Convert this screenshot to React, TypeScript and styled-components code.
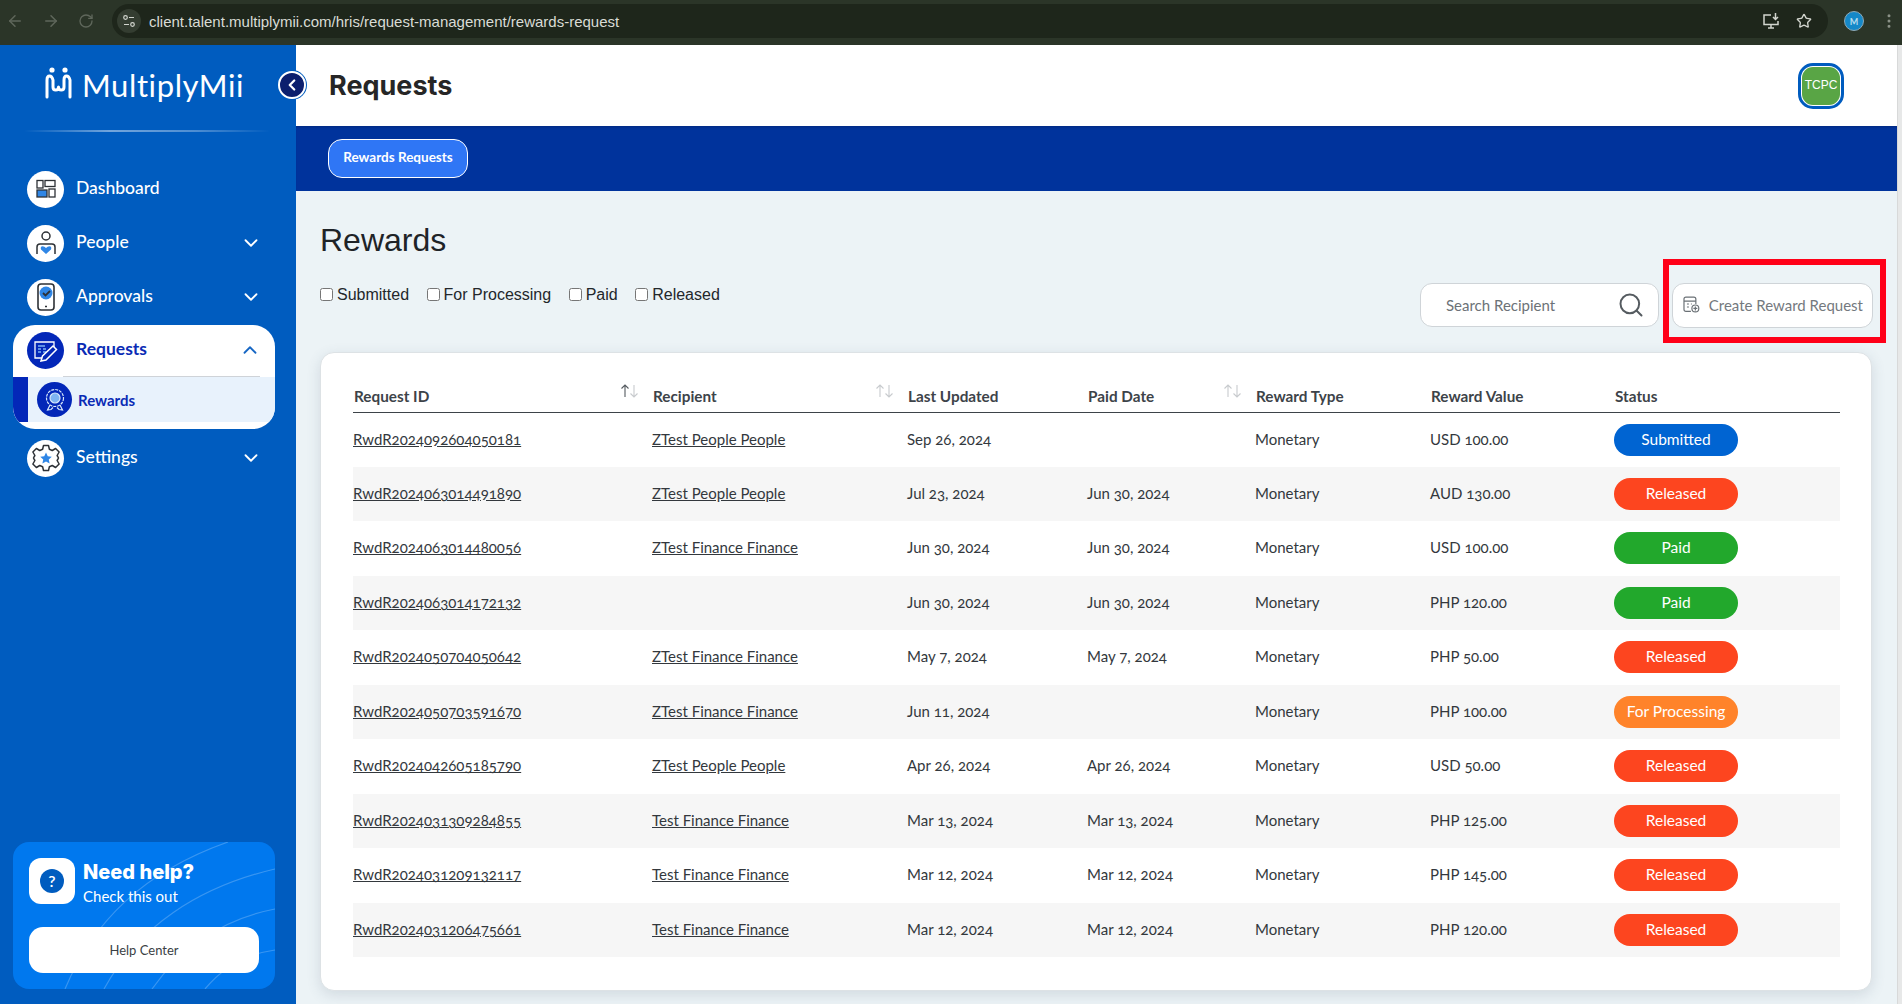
import React from "react";
import styled, { createGlobalStyle } from "styled-components";
import { ArrowLeft, ArrowRight, RotateCw, Star, EllipsisVertical, ChevronDown, ChevronUp, ChevronLeft, Search } from "lucide-react";

const Global = createGlobalStyle`
  html, body { margin: 0; padding: 0; height: 100%; overflow: hidden; }
  body { font-family: "Lato", "Open Sans", sans-serif; }
  * { box-sizing: border-box; }
`;

const Page = styled.div`
  width: 1902px;
  height: 1004px;
  display: flex;
  flex-direction: column;
  overflow: hidden;
  background: #ecf3f6;
`;

/* Browser chrome */
const BrowserBar = styled.div`
  height: 45px;
  flex: none;
  background: #2b3528;
  display: flex;
  align-items: center;
  padding: 0 0 3px 5px;
  color: #8b9287;
`;
const NavButton = styled.span`
  width: 36px;
  height: 20px;
  display: flex;
  align-items: center;
  justify-content: flex-start;
  padding-left: 1px;
  color: ${(p: { $dim?: boolean }) => (p.$dim ? "#5f675b" : "#7b8377")};
`;
const UrlPill = styled.div`
  width: 1716px;
  height: 34px;
  margin-left: -1px;
  border-radius: 17px;
  background: #1e261b;
  display: flex;
  align-items: center;
  padding: 0 16px 0 5px;
`;
const TuneBadge = styled.span`
  width: 24px;
  height: 24px;
  border-radius: 50%;
  background: #343d31;
  display: flex;
  align-items: center;
  justify-content: center;
  margin-right: 8px;
`;
const UrlText = styled.span`
  flex: 1;
  font: 15px "Liberation Sans", Arial, sans-serif;
  color: #d9dcd5;
`;
const PillIcon = styled.span`
  display: flex;
  margin-left: 16px;
  color: #d2d5ce;
`;
const ProfileDot = styled.span`
  width: 20px;
  height: 20px;
  margin-left: 16px;
  border-radius: 50%;
  background: #1588c8;
  border: 1px solid #8fa9b5;
  display: flex;
  align-items: center;
  justify-content: center;
  color: #b6dcee;
  font: 700 9px/1 "Lato", sans-serif;
`;
const DotsIcon = styled.span`
  display: flex;
  margin-left: 16px;
  color: #8b9287;
`;

/* Shell */
const Shell = styled.div`
  flex: 1;
  display: flex;
  min-height: 0;
  position: relative;
`;
const Sidebar = styled.aside`
  width: 296px;
  flex: none;
  background: #005cbf;
  display: flex;
  flex-direction: column;
  color: #fff;
  padding-bottom: 15px;
`;
const LogoRow = styled.div`
  height: 63px;
  padding: 22px 0 0 45px;
  display: flex;
  align-items: flex-start;
  gap: 10px;
`;
const LogoWord = styled.span`
  font: 400 31px/36px "Lato", sans-serif;
  letter-spacing: 0.6px;
  color: #fff;
`;
const Divider = styled.div`
  height: 2px;
  margin: 22px 26px 0 24px;
  background: linear-gradient(90deg, rgba(255,255,255,0), rgba(255,255,255,.45) 35%, rgba(255,255,255,.3) 70%, rgba(255,255,255,0));
`;
const Nav = styled.nav`
  margin-top: 39px;
  display: flex;
  flex-direction: column;
`;
const NavItem = styled.div`
  height: 36px;
  margin: 0 0 18px 27px;
  width: 235px;
  display: flex;
  align-items: center;
  gap: 12px;
  font-size: 17.5px;
  font-weight: 500;
  line-height: 32px;
  color: #fff;
`;
const NavIconCircle = styled.span`
  width: 37px;
  height: 37px;
  border-radius: 50%;
  flex: none;
  display: flex;
  align-items: center;
  justify-content: center;
  background: ${(p: { $active?: boolean }) => (p.$active ? "#0327b8" : "#fff")};
`;
const NavLabel = styled.span`
  flex: 1;
  padding-bottom: 2px;
`;
const ActiveGroup = styled.div`
  margin: -8px 21px 11px 13px;
  height: 104px;
  border-radius: 22px;
  background: #fff;
  overflow: hidden;
  display: flex;
  flex-direction: column;
`;
const ActiveHead = styled.div`
  height: 51px;
  flex: none;
  padding: 7px 14px 0 14px;
  display: flex;
  align-items: flex-start;
  gap: 12px;
  font-size: 17.5px;
  font-weight: 700;
  color: #0a2bb5;
`;
const ActiveLabel = styled.span`
  flex: 1;
  line-height: 34px;
`;
const ActiveChevron = styled.span`
  display: flex;
  margin-top: 7px;
  color: #1767c4;
`;
const SubRule = styled.div`
  height: 1px;
  flex: none;
  margin: 0 15px 0 50px;
  background: #cfd3d8;
`;
const SubRow = styled.div`
  height: 45px;
  flex: none;
  background: #e8f2fc;
  border-left: 15px solid #0327b8;
  display: flex;
  align-items: center;
  gap: 6px;
  padding-left: 9px;
  font-size: 15px;
  font-weight: 700;
  color: #0a2bb5;
`;
const SubIcon = styled.span`
  width: 35px;
  height: 35px;
  border-radius: 50%;
  background: #0327b8;
  display: flex;
  align-items: center;
  justify-content: center;
`;
const HelpCard = styled.div`
  position: relative;
  overflow: hidden;
  margin: auto 21px 0 13px;
  height: 147px;
  border-radius: 16px;
  background: #0078ee;
  padding: 16px;
`;
const HelpArcs = styled.svg`
  position: absolute;
  inset: 0;
`;
const HelpTop = styled.div`
  position: relative;
  display: flex;
  gap: 8px;
`;
const HelpTile = styled.span`
  width: 46px;
  height: 46px;
  border-radius: 12px;
  background: #fff;
  display: flex;
  align-items: center;
  justify-content: center;
`;
const HelpQ = styled.span`
  width: 24px;
  height: 24px;
  border-radius: 50%;
  background: #005cbf;
  color: #fff;
  font: 600 16px/24px "Lato", sans-serif;
  text-align: center;
`;
const HelpText = styled.div`
  display: flex;
  flex-direction: column;
`;
const HelpTitle = styled.span`
  font: 800 20px/28px "Inter", sans-serif;
  color: #fff;
`;
const HelpSub = styled.span`
  font: 400 15px/20px "Lato", sans-serif;
  color: #fff;
`;
const HelpButton = styled.div`
  position: relative;
  margin-top: 21px;
  height: 46px;
  border-radius: 14px;
  background: #fff;
  color: #3a3f45;
  font: 400 13px/46px "Lato", sans-serif;
  text-align: center;
`;
const CollapseButton = styled.span`
  position: absolute;
  left: 278px;
  top: 26px;
  width: 28px;
  height: 28px;
  border-radius: 50%;
  background: #0c1f6e;
  border: 2px solid #fff;
  box-shadow: 0 0 0 1px #005cbf;
  color: #fff;
  display: flex;
  align-items: center;
  justify-content: center;
`;

/* Main */
const Main = styled.main`
  flex: 1;
  min-width: 0;
  display: flex;
  flex-direction: column;
`;
const Header = styled.header`
  height: 81px;
  flex: none;
  background: #fff;
  padding: 0 53px 0 33px;
  display: flex;
  align-items: center;
  justify-content: space-between;
`;
const PageTitle = styled.h1`
  margin: 0;
  font: 700 27px/1 "Inter", sans-serif;
  color: #262626;
`;
const AvatarRing = styled.span`
  width: 46px;
  height: 46px;
  border: 3px solid #005cbf;
  border-radius: 15px;
  padding: 1px;
  display: flex;
`;
const Avatar = styled.span`
  flex: 1;
  border-radius: 11px;
  background: #59a545;
  color: #fff;
  font: 12px/36px "Liberation Sans", Arial, sans-serif;
  text-align: center;
`;
const TabBand = styled.div`
  height: 65px;
  flex: none;
  background: #00339c;
  padding: 13px 0 0 32px;
  box-shadow: inset 0 3px 3px -2px #00277e;
`;
const TabPill = styled.span`
  display: inline-block;
  width: 140px;
  height: 39px;
  border: 1px solid #fff;
  border-radius: 14px;
  background: #2f76f5;
  color: #fff;
  font: 700 13.5px/35px "Lato", sans-serif;
  text-align: center;
`;
const Content = styled.div`
  flex: 1;
  padding: 30px 11px 0 24px;
`;
const Heading = styled.h2`
  margin: 0;
  font: 400 32px/38px "Liberation Sans", Arial, sans-serif;
  color: #1e2327;
`;
const Toolbar = styled.div`
  display: flex;
  justify-content: space-between;
  align-items: flex-start;
`;
const Filters = styled.div`
  display: flex;
  gap: 17.5px;
  padding-top: 26px;
`;
const FilterLabel = styled.label`
  display: flex;
  align-items: center;
  gap: 4px;
  font: 16px/20px "Liberation Sans", Arial, sans-serif;
  color: #23272b;
`;
const FilterBox = styled.input`
  width: 13px;
  height: 13px;
  margin: 0 0 2px;
`;
const Actions = styled.div`
  display: flex;
  align-items: flex-start;
  gap: 4px;
`;
const SearchBox = styled.div`
  width: 239px;
  height: 44px;
  margin-top: 24px;
  border: 1px solid #cfd4d8;
  border-radius: 12px;
  background: #fff;
  padding: 0 13px 1px 25px;
  display: flex;
  align-items: center;
  justify-content: space-between;
  font-size: 15px;
  color: #6c7277;
`;
const AnnotationFrame = styled.div`
  width: 223px;
  height: 84px;
  border: 6px solid #ff0018;
  padding: 18px 0 0 3px;
`;
const CreateButton = styled.div`
  width: 201px;
  height: 45px;
  border: 1px solid #cfd4d8;
  border-radius: 12px;
  background: #fff;
  padding: 0 9px 2px 10px;
  display: flex;
  align-items: center;
  gap: 9px;
  font-size: 15px;
  color: #74797e;
  white-space: nowrap;
`;
const Card = styled.section`
  margin: 9px 14px 0 0;
  padding: 33px 32px 33px 32px;
  background: #fff;
  border: 1px solid #dde2e5;
  border-radius: 14px;
  box-shadow: 0 4px 14px rgba(70, 90, 110, .16);
`;
const Table = styled.table`
  width: 1487px;
  table-layout: fixed;
  border-collapse: collapse;
  font-size: 15px;
  color: #33383d;
  font-feature-settings: "onum" 1;
`;
const Th = styled.th`
  height: 26px;
  padding: 0 0 0 1px;
  text-align: left;
  font-weight: 700;
  font-size: 15.3px;
  color: #3d4349;
  border-bottom: 1px solid #3d4349;
  vertical-align: top;
`;
const ThInner = styled.div`
  display: flex;
  justify-content: space-between;
  padding-right: 13px;
  line-height: 21px;
`;
const SortIcon = styled.svg`
  margin-top: -2px;
`;
const Row = styled.tr`
  height: 54.5px;
  background: ${(p: { $alt: boolean }) => (p.$alt ? "#f6f6f6" : "#fff")};
`;
const Td = styled.td`
  padding: 0 0 2px;
`;
const RowLink = styled.a`
  color: #33383d;
  text-decoration: underline;
`;
const Badge = styled.span`
  display: block;
  width: 124px;
  height: 32px;
  margin-top: 2px;
  border-radius: 16px;
  color: #fff;
  text-align: center;
  font-size: 15.5px;
  line-height: 30px;
  font-feature-settings: normal;
  background: ${(p: { $status: string }) =>
    ({ Submitted: "#0064d2", Released: "#fd451f", Paid: "#22a82c", "For Processing": "#ff832a" } as Record<string, string>)[p.$status]};
`;
const Scrollbar = styled.div`
  width: 5px;
  flex: none;
  background: #e7e8e8;
  border-left: 1px solid #d8d9d9;
`;

/* Drawings */
const LogoMark = () => (
  <svg width="27" height="37" viewBox="0 0 27 37" fill="none">
    <circle cx="7" cy="3" r="2.6" fill="#fff" />
    <circle cx="20" cy="3" r="2.6" fill="#fff" />
    <path d="M2 30V13q0-4 2.500-4T8 13v7q0 3 2.750 3T13.500 20q0 3 2.750 3T19 20v-7q0-4 2.500-4T25 13v17" stroke="#fff" strokeWidth="3" strokeLinecap="round" strokeLinejoin="round" />
  </svg>
);
const DashIcon = () => (
  <svg width="20" height="20" viewBox="0 0 20 20" fill="none" stroke="#2d3136" strokeWidth="1.300">
    <rect x="1" y="1.500" width="6" height="7.500" />
    <rect x="9" y="1.500" width="10" height="6" />
    <rect x="1" y="11" width="10" height="7" fill="#2f86e6" />
    <rect x="13" y="10" width="6" height="8" />
  </svg>
);
const PeopleIcon = () => (
  <svg width="24" height="26" viewBox="0 0 24 26" fill="none" stroke="#2d3136" strokeWidth="1.500">
    <circle cx="12" cy="6" r="4" />
    <path d="M6 14h12" />
    <path d="M3 24v-7q0-3 3-3M21 24v-7q0-3-3-3" />
    <path d="M12 24l-5-4.500q-1-3 1.500-3.200 2 0 3.500 1.700 1.500-1.700 3.500-1.700 2.500.2 1.500 3.200z" fill="#2f86e6" stroke="none" />
  </svg>
);
const ApprovalIcon = () => (
  <svg width="20" height="28" viewBox="0 0 20 28" fill="none" stroke="#2d3136" strokeWidth="1.600">
    <rect x="2" y="1" width="16" height="26" rx="3" />
    <circle cx="10" cy="10" r="6.500" fill="#2f86e6" stroke="none" />
    <path d="M7 10l2.500 2.500L14 8" strokeWidth="1.800" />
    <path d="M9 23.500h2" />
  </svg>
);
const RequestIcon = () => (
  <svg width="26" height="24" viewBox="0 0 26 24" fill="none" stroke="#fff" strokeWidth="1.300">
    <path d="M13 19H2V3h19v6" />
    <path d="M5 7h7M5 10h3M5 13h3M10 10h3M10 13h3" stroke="#7eb4f2" strokeWidth="1.600" />
    <path d="M8 22l1.500-5L20 7l3.500 3.500L13 21z" fill="#0327b8" strokeWidth="1.500" />
  </svg>
);
const SettingsIcon = () => (
  <svg width="30" height="30" viewBox="0 0 24 24" fill="none" stroke="#2d3136" strokeWidth="1.200" strokeLinejoin="round">
    <path d="M10 2h4l.7 3 2.300 1 2.700-1.600 2.800 2.800L20.900 10l.6 1 .5 1-.5 1-.6 1 1.600 2.800-2.800 2.800L17 18l-2.300 1-.7 3h-4l-.7-3L7 18l-2.700 1.600-2.800-2.800L3.100 14l-.6-1L2 12l.5-1 .6-1-1.600-2.800 2.800-2.800L7 6l2.300-1z" />
    <path d="M12 7.500l1.400 3 3.200.4-2.400 2.200.7 3.200-2.900-1.600-2.900 1.600.7-3.200-2.400-2.200 3.200-.4z" fill="#2f86e6" stroke="none" />
  </svg>
);
const RewardIcon = () => (
  <svg width="22" height="24" viewBox="0 0 22 24" fill="none" stroke="#d8e8fb" strokeWidth="1.200">
    <circle cx="11" cy="10" r="8.500" strokeDasharray="3 1" />
    <circle cx="11" cy="10" r="5" fill="#7eb4f2" />
    <path d="M6 17l-2.500 5 3.500-.5 2-2M16 17l2.500 5-3.500-.5-2-2" />
  </svg>
);
const TuneIcon = () => (
  <svg width="14" height="14" viewBox="0 0 14 14" fill="none" stroke="#d2d5ce" strokeWidth="1.200">
    <circle cx="3.500" cy="3.500" r="1.800" />
    <path d="M7 3.500h5M2 10.500h5" />
    <circle cx="10.500" cy="10.500" r="1.800" />
  </svg>
);
const InstallIcon = () => (
  <svg width="18" height="16" viewBox="0 0 18 16" fill="none" stroke="#d2d5ce" strokeWidth="1.500">
    <path d="M9 2H2v9.500h14V8" />
    <path d="M6 15h6M9 11.500V15" />
    <path d="M13.500 0v6M11 4l2.500 2.500L16 4" />
  </svg>
);
const CreateIcon = () => (
  <svg width="17" height="17" viewBox="0 0 17 17" fill="none" stroke="#6a7075" strokeWidth="1.200">
    <path d="M8 15.500H3q-2 0-2-2V3q0-2 2-2h8q2 0 2 2v5" />
    <path d="M1 5h12M4 8h2M4 11h2M8 8h1" />
    <circle cx="12.500" cy="12.500" r="3.500" fill="#fff" />
    <path d="M12.500 10.500v4M10.500 12.500h4" />
  </svg>
);
const SortArrows = ({ dark }: { dark?: boolean }) => (
  <SortIcon width="19" height="14" viewBox="0 0 19 14" fill="none" strokeWidth="1.100">
    <path d="M5 13V1M1.500 4.500L5 1l3.500 3.500" stroke={dark ? "#555b60" : "#c8cbce"} />
    <path d="M14 1v12M10.500 9.500L14 13l3.500-3.500" stroke="#c8cbce" />
  </SortIcon>
);
const Arcs = () => (
  <HelpArcs width="262" height="147" viewBox="0 0 262 147" fill="none" stroke="#fff" strokeOpacity=".22" strokeWidth="1.200">
    <path d="M52 147C80 80 130 30 215 0" />
    <path d="M91 147C125 85 185 45 262 27" />
    <path d="M139 147C165 110 205 78 262 67" />
    <path d="M192 147C210 125 235 112 262 108" />
  </HelpArcs>
);

const columns: { label: string; sort?: "dark" | "light"; width: number }[] = [
  { label: "Request ID", sort: "dark", width: 299 },
  { label: "Recipient", sort: "light", width: 255 },
  { label: "Last Updated", width: 180 },
  { label: "Paid Date", sort: "light", width: 168 },
  { label: "Reward Type", width: 175 },
  { label: "Reward Value", width: 184 },
  { label: "Status", width: 226 },
];

const rows = [
  ["RwdR2024092604050181", "ZTest People People", "Sep 26, 2024", "", "USD 100.00", "Submitted"],
  ["RwdR2024063014491890", "ZTest People People", "Jul 23, 2024", "Jun 30, 2024", "AUD 130.00", "Released"],
  ["RwdR2024063014480056", "ZTest Finance Finance", "Jun 30, 2024", "Jun 30, 2024", "USD 100.00", "Paid"],
  ["RwdR2024063014172132", "", "Jun 30, 2024", "Jun 30, 2024", "PHP 120.00", "Paid"],
  ["RwdR2024050704050642", "ZTest Finance Finance", "May 7, 2024", "May 7, 2024", "PHP 50.00", "Released"],
  ["RwdR2024050703591670", "ZTest Finance Finance", "Jun 11, 2024", "", "PHP 100.00", "For Processing"],
  ["RwdR2024042605185790", "ZTest People People", "Apr 26, 2024", "Apr 26, 2024", "USD 50.00", "Released"],
  ["RwdR2024031309284855", "Test Finance Finance", "Mar 13, 2024", "Mar 13, 2024", "PHP 125.00", "Released"],
  ["RwdR2024031209132117", "Test Finance Finance", "Mar 12, 2024", "Mar 12, 2024", "PHP 145.00", "Released"],
  ["RwdR2024031206475661", "Test Finance Finance", "Mar 12, 2024", "Mar 12, 2024", "PHP 120.00", "Released"],
];

const navTop = [
  { label: "Dashboard", icon: <DashIcon /> },
  { label: "People", icon: <PeopleIcon />, more: true },
  { label: "Approvals", icon: <ApprovalIcon />, more: true },
];

export default function App() {
  return (
    <Page>
      <Global />
      <BrowserBar>
        <NavButton $dim><ArrowLeft size={18} /></NavButton>
        <NavButton $dim><ArrowRight size={18} /></NavButton>
        <NavButton $dim><RotateCw size={16} /></NavButton>
        <UrlPill>
          <TuneBadge><TuneIcon /></TuneBadge>
          <UrlText>client.talent.multiplymii.com/hris/request-management/rewards-request</UrlText>
          <PillIcon><InstallIcon /></PillIcon>
          <PillIcon><Star size={16} /></PillIcon>
        </UrlPill>
        <ProfileDot>M</ProfileDot>
        <DotsIcon><EllipsisVertical size={18} /></DotsIcon>
      </BrowserBar>
      <Shell>
        <Sidebar>
          <LogoRow>
            <LogoMark />
            <LogoWord>MultiplyMii</LogoWord>
          </LogoRow>
          <Divider />
          <Nav>
            {navTop.map((n) => (
              <NavItem key={n.label}>
                <NavIconCircle>{n.icon}</NavIconCircle>
                <NavLabel>{n.label}</NavLabel>
                {n.more && <ChevronDown size={22} />}
              </NavItem>
            ))}
            <ActiveGroup>
              <ActiveHead>
                <NavIconCircle $active><RequestIcon /></NavIconCircle>
                <ActiveLabel>Requests</ActiveLabel>
                <ActiveChevron><ChevronUp size={22} /></ActiveChevron>
              </ActiveHead>
              <SubRule />
              <SubRow>
                <SubIcon><RewardIcon /></SubIcon>
                Rewards
              </SubRow>
            </ActiveGroup>
            <NavItem>
              <NavIconCircle><SettingsIcon /></NavIconCircle>
              <NavLabel>Settings</NavLabel>
              <ChevronDown size={22} />
            </NavItem>
          </Nav>
          <HelpCard>
            <Arcs />
            <HelpTop>
              <HelpTile><HelpQ>?</HelpQ></HelpTile>
              <HelpText>
                <HelpTitle>Need help?</HelpTitle>
                <HelpSub>Check this out</HelpSub>
              </HelpText>
            </HelpTop>
            <HelpButton>Help Center</HelpButton>
          </HelpCard>
        </Sidebar>
        <CollapseButton><ChevronLeft size={18} strokeWidth={3} /></CollapseButton>
        <Main>
          <Header>
            <PageTitle>Requests</PageTitle>
            <AvatarRing><Avatar>TCPC</Avatar></AvatarRing>
          </Header>
          <TabBand><TabPill>Rewards Requests</TabPill></TabBand>
          <Content>
            <Heading>Rewards</Heading>
            <Toolbar>
              <Filters>
                {["Submitted", "For Processing", "Paid", "Released"].map((f) => (
                  <FilterLabel key={f}>
                    <FilterBox type="checkbox" />
                    {f}
                  </FilterLabel>
                ))}
              </Filters>
              <Actions>
                <SearchBox>
                  Search Recipient
                  <Search size={28} strokeWidth={1.700} color="#555b60" />
                </SearchBox>
                <AnnotationFrame>
                  <CreateButton>
                    <CreateIcon />
                    Create Reward Request
                  </CreateButton>
                </AnnotationFrame>
              </Actions>
            </Toolbar>
            <Card>
              <Table>
                <colgroup>
                  {columns.map((c) => (
                    <col key={c.label} width={c.width} />
                  ))}
                </colgroup>
                <thead>
                  <tr>
                    {columns.map((c) => (
                      <Th key={c.label}>
                        <ThInner>
                          {c.label}
                          {c.sort && <SortArrows dark={c.sort === "dark"} />}
                        </ThInner>
                      </Th>
                    ))}
                  </tr>
                </thead>
                <tbody>
                  {rows.map((r, i) => (
                    <Row key={r[0]} $alt={i % 2 === 1}>
                      <Td><RowLink>{r[0]}</RowLink></Td>
                      <Td><RowLink>{r[1]}</RowLink></Td>
                      <Td>{r[2]}</Td>
                      <Td>{r[3]}</Td>
                      <Td>Monetary</Td>
                      <Td>{r[4]}</Td>
                      <Td><Badge $status={r[5]}>{r[5]}</Badge></Td>
                    </Row>
                  ))}
                </tbody>
              </Table>
            </Card>
          </Content>
        </Main>
        <Scrollbar />
      </Shell>
    </Page>
  );
}
